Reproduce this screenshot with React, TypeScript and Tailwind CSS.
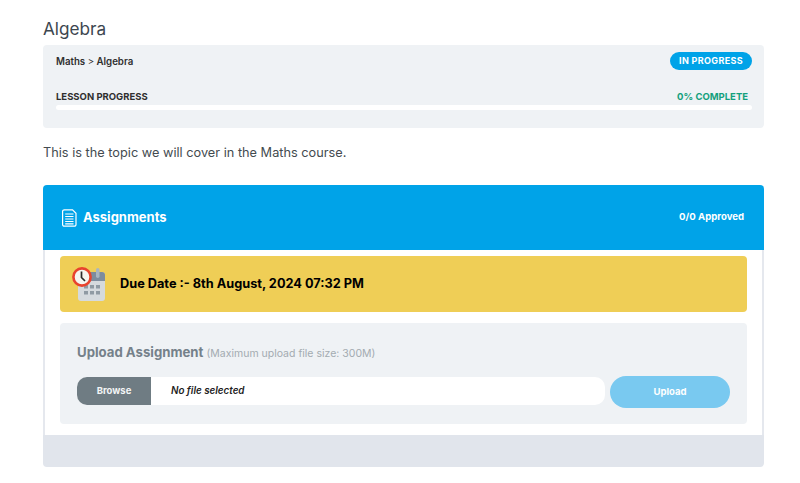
const CalendarClock = () => (
  <svg width="34" height="34" viewBox="0 0 34 34" className="shrink-0">
    <rect x="6" y="5" width="27" height="29" rx="3" fill="#d5dade" />
    <path d="M6 14V8a3 3 0 0 1 3-3h21a3 3 0 0 1 3 3v6z" fill="#7d8c9e" />
    <rect x="24" y="1" width="3.5" height="10" rx="1.75" fill="#a9b5c0" />
    <g fill="#8f9aa3">
      <rect x="12" y="18" width="4" height="3.5" />
      <rect x="18" y="18" width="4" height="3.5" />
      <rect x="24" y="18" width="4" height="3.5" />
      <rect x="12" y="24" width="4" height="3.5" />
      <rect x="18" y="24" width="4" height="3.5" />
      <rect x="24" y="24" width="4" height="3.5" />
    </g>
    <circle cx="10" cy="10" r="8.6" fill="#f5f5f0" stroke="#e8432e" strokeWidth="2.6" />
    <path d="M9.5 4.5V10.5L13 14" fill="none" stroke="#2b2b2b" strokeWidth="1.7" />
  </svg>
);

const DocIcon = () => (
  <svg width="15" height="18" viewBox="0 0 15 18" fill="none" stroke="#fff" strokeWidth="1.2" className="shrink-0">
    <path d="M2.3 0.8H10.5L14 4.3V15.5a1.7 1.7 0 0 1-1.7 1.7H2.3A1.7 1.7 0 0 1 0.6 15.5V2.5A1.7 1.7 0 0 1 2.3 0.8z" />
    <path d="M3.2 5H11.5M3.2 7.5H11.5M3.2 10H11.5M3.2 12.5H11.5M3.2 14.8H11.5" />
  </svg>
);

export default function App() {
  return (
    <div className="w-[800px] h-[483px] overflow-hidden bg-white font-['Inter',sans-serif] text-[#3d4750]">
      <div className="w-[721px] ml-[43px] pt-[18px]">
        <h1 className="text-[17.2px] leading-[22px] font-normal">Algebra</h1>
        <div className="mt-[5px] h-[83px] rounded-[4px] bg-[#eff2f5] pl-[13px] pr-[12px] pt-[7px]">
          <div className="flex items-start justify-between">
            <div className="mt-[4px] text-[9.7px] leading-[12px] font-semibold text-[#2f2f2f]">
              Maths <span className="font-normal">&gt;</span> Algebra
            </div>
            <span className="h-[18px] w-[82px] rounded-full bg-[#00a3e8] text-center text-[9px] leading-[18px] font-bold tracking-[0.35px] text-white">
              IN PROGRESS
            </span>
          </div>
          <div className="mt-[21px] flex justify-between pr-[4px] text-[9.5px] leading-[12px] font-bold">
            <span className="text-[#2f2f2f]">LESSON PROGRESS</span>
            <span className="text-[#13a07c]">0% COMPLETE</span>
          </div>
          <div className="mt-[2px] h-[5px] rounded-full bg-white" />
        </div>
        <p className="mt-[15px] text-[12.75px] leading-[20px] text-[#444b50]">This is the topic we will cover in the Maths course.</p>
        <section className="mt-[22px] h-[282px] flex flex-col overflow-hidden rounded-[4px]">
          <div className="h-[65px] shrink-0 flex items-center justify-between bg-[#00a3e8] pl-[19px] pr-[20px] text-white">
            <div className="flex items-center gap-[6px]">
              <DocIcon />
              <span className="text-[13px] font-bold">Assignments</span>
            </div>
            <span className="text-[9.6px] font-bold">0/0 Approved</span>
          </div>
          <div className="flex-1 border-x-2 border-[#e5e8ee] px-[15px] pt-[6px]">
            <div className="h-[56px] flex items-center gap-[14px] rounded-[4px] bg-[#efce56] pl-[12px]">
              <CalendarClock />
              <span className="text-[12.75px] font-bold text-black">Due Date :- 8th August, 2024 07:32 PM</span>
            </div>
            <div className="mt-[11px] h-[101px] rounded-[4px] bg-[#eff2f5] pl-[17px] pr-[17px] pt-[20px]">
              <div className="text-[13.2px] leading-[18px] font-bold text-[#75818a]">
                Upload Assignment <span className="text-[10.5px] font-normal text-[#a3abb1]">(Maximum upload file size: 300M)</span>
              </div>
              <div className="mt-[13px] flex items-start gap-[5px]">
                <div className="h-[28px] mt-[1px] flex-1 flex items-center rounded-[10px] bg-white overflow-hidden">
                  <span className="w-[74px] h-full flex items-center justify-center pt-[1px] bg-[#6f7c83] text-[9.5px] font-bold text-[#f3f5f6]">Browse</span>
                  <span className="ml-[20px] pt-[1px] text-[9.8px] font-semibold italic text-[#222]">No file selected</span>
                </div>
                <button className="h-[32px] w-[120px] rounded-full bg-[#79c9f0] text-[9.5px] font-bold text-white">Upload</button>
              </div>
            </div>
          </div>
          <div className="h-[32px] shrink-0 bg-[#e1e5ec]" />
        </section>
      </div>
    </div>
  );
}
